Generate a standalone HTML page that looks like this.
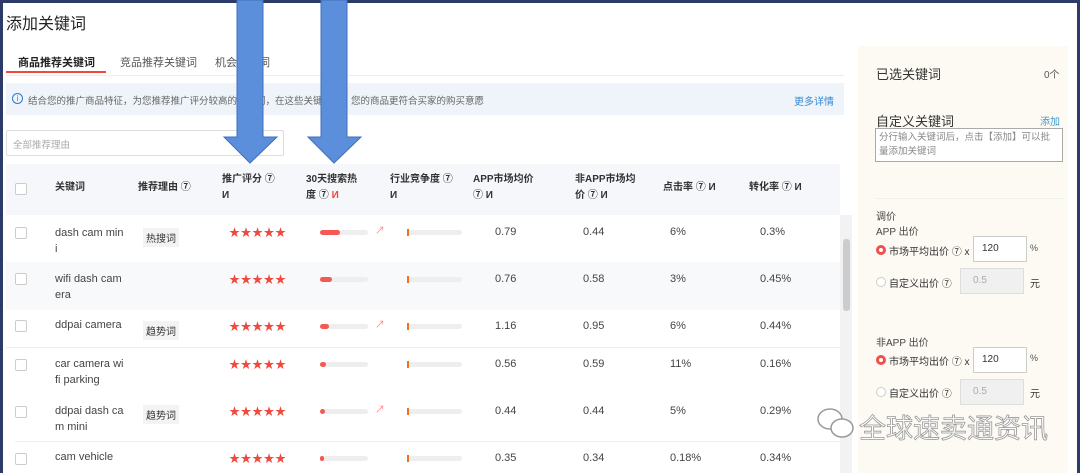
<!DOCTYPE html><html><head><meta charset="utf-8"><style>
*{margin:0;padding:0;box-sizing:border-box}
body{width:1080px;height:473px;overflow:hidden;background:#fff;font-family:"Liberation Sans","Noto Sans CJK SC",sans-serif;color:#333;position:relative;font-size:11px}
.a{position:absolute;white-space:nowrap}
.h{font-size:10px;color:#333;font-weight:bold;line-height:16px}
.c{font-size:11px;color:#444}
.cb{position:absolute;left:15px;width:12px;height:12px;border:1px solid #ccc;border-radius:2px;background:#fff}
.star{color:#f04a3e;font-size:11px;letter-spacing:0.5px}
.tr{position:absolute;left:320px;width:48px;height:5px;background:#eee;border-radius:3px}
.tr i{display:block;height:5px;background:#f45a55;border-radius:3px}
.cp{position:absolute;left:407px;width:55px;height:5px;background:#eee;border-radius:3px}
.cp i{display:block;width:2px;height:7px;margin-top:-1px;background:#f07020}
.tag{position:absolute;left:143px;background:#f3f3f3;font-size:10px;padding:2px 3px;color:#333}
.rb{position:absolute;width:10px;height:10px;border-radius:50%}
</style></head><body>
<div class="a" style="left:0;top:0;width:1080px;height:3px;background:#2b3a66"></div>
<div class="a" style="left:0;top:0;width:3px;height:473px;background:#2b3a66"></div>
<div class="a" style="left:1077px;top:0;width:3px;height:473px;background:#2b3a66"></div>
<div class="a" style="left:6px;top:10px;font-size:16px;color:#222">添加关键词</div>
<div class="a" style="left:18px;top:54px;font-size:11px;font-weight:bold;color:#222">商品推荐关键词</div>
<div class="a" style="left:6px;top:71px;width:100px;height:2px;background:#f04a3e"></div>
<div class="a" style="left:120px;top:54px;font-size:11px;color:#555">竞品推荐关键词</div>
<div class="a" style="left:215px;top:54px;font-size:11px;color:#555">机会关键词</div>
<div class="a" style="left:6px;top:75px;width:838px;height:1px;background:#eee"></div>
<div class="a" style="left:6px;top:83px;width:838px;height:32px;background:#eef4f9"></div>
<div class="a" style="left:12px;top:93px;width:11px;height:11px;border:1px solid #2a7bd0;border-radius:50%;font-size:8px;color:#2a7bd0;text-align:center;line-height:9px">i</div>
<div class="a" style="left:28px;top:93px;font-size:9.5px;color:#666">结合您的推广商品特征，为您推荐推广评分较高的关键词，在这些关键词下，您的商品更符合买家的购买意愿</div>
<div class="a" style="left:794px;top:93px;font-size:10px;color:#3a8ad0">更多详情</div>
<div class="a" style="left:6px;top:130px;width:278px;height:26px;border:1px solid #ddd;border-radius:2px"></div>
<div class="a" style="left:13px;top:137px;font-size:9.5px;color:#aaa">全部推荐理由</div>
<div class="a" style="left:6px;top:164px;width:834px;height:51px;background:#f5f7fa"></div>
<div class="cb" style="top:183px"></div>
<div class="a h" style="left:55px;top:180px">关键词</div>
<div class="a h" style="left:138px;top:180px">推荐理由 ⑦</div>
<div class="a h" style="left:222px;top:172px">推广评分 ⑦<br>И</div>
<div class="a h" style="left:306px;top:172px">30天搜索热<br>度 ⑦ <span style="color:#e44">И</span></div>
<div class="a h" style="left:390px;top:172px">行业竞争度 ⑦<br>И</div>
<div class="a h" style="left:473px;top:172px">APP市场均价<br>⑦ И</div>
<div class="a h" style="left:575px;top:172px">非APP市场均<br>价 ⑦ И</div>
<div class="a h" style="left:663px;top:180px">点击率 ⑦ И</div>
<div class="a h" style="left:749px;top:180px">转化率 ⑦ И</div>
<div class="a" style="left:6px;top:262px;width:834px;height:48px;background:#f7f9fb"></div>
<div class="a" style="left:6px;top:347px;width:834px;height:1px;background:#eee"></div>
<div class="a" style="left:15px;top:441px;width:825px;height:1px;background:#eee"></div>
<div class="a" style="left:840px;top:215px;width:12px;height:258px;background:#f2f2f2"></div>
<div class="a" style="left:843px;top:239px;width:7px;height:72px;background:#ccc;border-radius:3px"></div>

<div class="cb" style="top:227px"></div><div class="a c" style="left:55px;top:225px;line-height:16px">dash cam min<br>i</div><div class="tag" style="top:228px">热搜词</div><div class="a star" style="left:229px;top:224px">★★★★★</div><div class="tr" style="top:230px"><i style="width:20px"></i></div><div class="a" style="left:375px;top:222px;color:#f88;font-size:10px">↗</div><div class="cp" style="top:230px"><i></i></div><div class="a c" style="left:495px;top:226px">0.79</div><div class="a c" style="left:583px;top:226px">0.44</div><div class="a c" style="left:670px;top:226px">6%</div><div class="a c" style="left:760px;top:226px">0.3%</div>

<div class="cb" style="top:273px"></div><div class="a c" style="left:55px;top:271px;line-height:16px">wifi dash cam<br>era</div><div class="a star" style="left:229px;top:271px">★★★★★</div><div class="tr" style="top:277px"><i style="width:12px"></i></div><div class="cp" style="top:277px"><i></i></div><div class="a c" style="left:495px;top:273px">0.76</div><div class="a c" style="left:583px;top:273px">0.58</div><div class="a c" style="left:670px;top:273px">3%</div><div class="a c" style="left:760px;top:273px">0.45%</div>

<div class="cb" style="top:320px"></div><div class="a c" style="left:55px;top:319px">ddpai camera</div><div class="tag" style="top:321px">趋势词</div><div class="a star" style="left:229px;top:318px">★★★★★</div><div class="tr" style="top:324px"><i style="width:9px"></i></div><div class="a" style="left:375px;top:316px;color:#f88;font-size:10px">↗</div><div class="cp" style="top:324px"><i></i></div><div class="a c" style="left:495px;top:320px">1.16</div><div class="a c" style="left:583px;top:320px">0.95</div><div class="a c" style="left:670px;top:320px">6%</div><div class="a c" style="left:760px;top:320px">0.44%</div>

<div class="cb" style="top:359px"></div><div class="a c" style="left:55px;top:356px;line-height:16px">car camera wi<br>fi parking</div><div class="a star" style="left:229px;top:356px">★★★★★</div><div class="tr" style="top:362px"><i style="width:6px"></i></div><div class="cp" style="top:362px"><i></i></div><div class="a c" style="left:495px;top:358px">0.56</div><div class="a c" style="left:583px;top:358px">0.59</div><div class="a c" style="left:670px;top:358px">11%</div><div class="a c" style="left:760px;top:358px">0.16%</div>

<div class="cb" style="top:406px"></div><div class="a c" style="left:55px;top:403px;line-height:16px">ddpai dash ca<br>m mini</div><div class="tag" style="top:405px">趋势词</div><div class="a star" style="left:229px;top:403px">★★★★★</div><div class="tr" style="top:409px"><i style="width:5px"></i></div><div class="a" style="left:375px;top:401px;color:#f88;font-size:10px">↗</div><div class="cp" style="top:409px"><i></i></div><div class="a c" style="left:495px;top:405px">0.44</div><div class="a c" style="left:583px;top:405px">0.44</div><div class="a c" style="left:670px;top:405px">5%</div><div class="a c" style="left:760px;top:405px">0.29%</div>

<div class="cb" style="top:453px"></div><div class="a c" style="left:55px;top:451px">cam vehicle</div><div class="a star" style="left:229px;top:450px">★★★★★</div><div class="tr" style="top:456px"><i style="width:4px"></i></div><div class="cp" style="top:456px"><i></i></div><div class="a c" style="left:495px;top:452px">0.35</div><div class="a c" style="left:583px;top:452px">0.34</div><div class="a c" style="left:670px;top:452px">0.18%</div><div class="a c" style="left:760px;top:452px">0.34%</div>

<div class="a" style="left:858px;top:46px;width:210px;height:427px;background:#fdfaf4"></div>
<div class="a" style="left:876px;top:64px;font-size:13px;color:#333">已选关键词</div>
<div class="a" style="left:1044px;top:66px;font-size:10px;color:#555">0个</div>
<div class="a" style="left:876px;top:111px;font-size:13px;color:#333">自定义关键词</div>
<div class="a" style="left:1040px;top:113px;font-size:10px;color:#3a9ad0">添加</div>
<div class="a" style="left:875px;top:128px;width:188px;height:34px;border:1px solid #aaa;background:#fff;font-size:9.5px;color:#888;padding:2px 3px;white-space:normal;line-height:14px">分行输入关键词后，点击【添加】可以批量添加关键词</div>
<div class="a" style="left:876px;top:198px;width:188px;height:1px;background:#eee"></div>
<div class="a" style="left:876px;top:208px;font-size:10px;color:#444">调价</div>
<div class="a" style="left:876px;top:223px;font-size:10px;color:#444">APP 出价</div>
<div class="rb" style="left:876px;top:245px;border:3px solid #f0504a;background:#fff"></div>
<div class="a" style="left:889px;top:243px;font-size:10px;color:#333">市场平均出价 ⑦ x</div>
<div class="a" style="left:973px;top:236px;width:54px;height:26px;border:1px solid #ccc;background:#fff;font-size:10px;padding:6px 8px">120</div>
<div class="a" style="left:1030px;top:243px;font-size:9px;color:#555">%</div>
<div class="rb" style="left:876px;top:277px;border:1px solid #ccc;background:#fff"></div>
<div class="a" style="left:889px;top:275px;font-size:10px;color:#333">自定义出价 ⑦</div>
<div class="a" style="left:960px;top:268px;width:64px;height:26px;border:1px solid #ddd;background:#f0f0f0;font-size:10px;padding:6px 12px;color:#aaa">0.5</div>
<div class="a" style="left:1030px;top:275px;font-size:10px;color:#333">元</div>
<div class="a" style="left:876px;top:334px;font-size:10px;color:#444">非APP 出价</div>
<div class="rb" style="left:876px;top:355px;border:3px solid #f0504a;background:#fff"></div>
<div class="a" style="left:889px;top:353px;font-size:10px;color:#333">市场平均出价 ⑦ x</div>
<div class="a" style="left:973px;top:347px;width:54px;height:26px;border:1px solid #ccc;background:#fff;font-size:10px;padding:6px 8px">120</div>
<div class="a" style="left:1030px;top:353px;font-size:9px;color:#555">%</div>
<div class="rb" style="left:876px;top:387px;border:1px solid #ccc;background:#fff"></div>
<div class="a" style="left:889px;top:385px;font-size:10px;color:#333">自定义出价 ⑦</div>
<div class="a" style="left:960px;top:379px;width:64px;height:26px;border:1px solid #ddd;background:#f0f0f0;font-size:10px;padding:6px 12px;color:#aaa">0.5</div>
<div class="a" style="left:1030px;top:385px;font-size:10px;color:#333">元</div>

<svg class="a" style="left:0;top:0" width="1080" height="473">
<polygon points="237,0 263,0 263,137 277,137 250,163 224,137 237,137" fill="#5b8fdc" stroke="#3f6fb8" stroke-width="1"/>
<polygon points="321,0 347,0 347,137 361,137 334,163 308,137 321,137" fill="#5b8fdc" stroke="#3f6fb8" stroke-width="1"/>
<g fill="#fff" stroke="#999" stroke-width="1.5">
<ellipse cx="830" cy="419" rx="12" ry="10"/><ellipse cx="842" cy="428" rx="11" ry="9"/>
</g>
<text x="859" y="438" font-family="Noto Sans CJK SC,sans-serif" font-size="27" fill="#fff" stroke="#999" stroke-width="0.8">全球速卖通资讯</text>
</svg>
</body></html>
